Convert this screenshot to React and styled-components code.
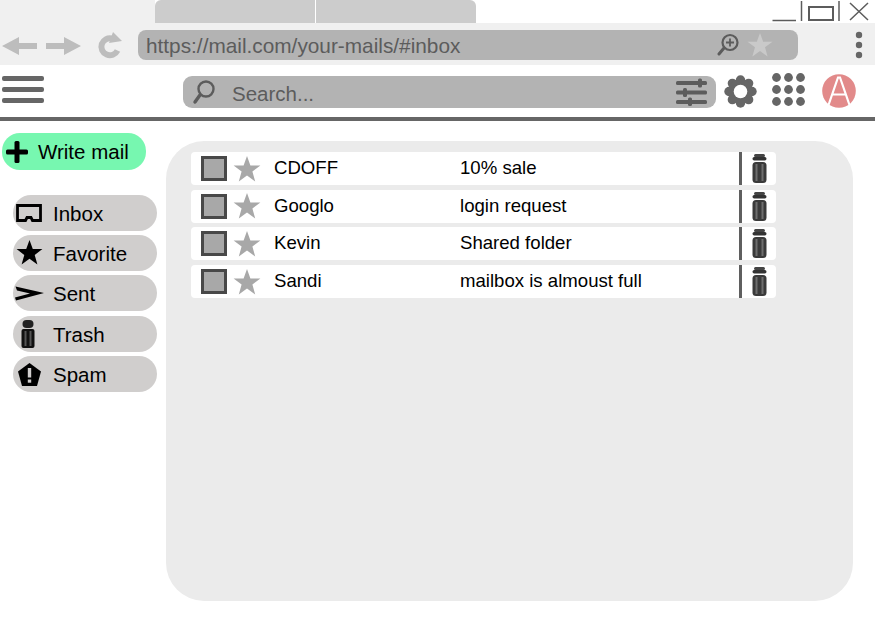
import React from "react";
import styled, { createGlobalStyle } from "styled-components";

const GlobalStyle = createGlobalStyle`
  html, body {
    margin: 0;
    padding: 0;
    background: #ffffff;
    font-family: "Liberation Sans", Arial, sans-serif;
  }
`;

const Page = styled.div`
  width: 875px;
  height: 622px;
  overflow: hidden;
  display: flex;
  flex-direction: column;
`;

const Space = styled.span`
  flex-shrink: 0;
  width: ${(p) => p.$w}px;
`;

// browser chrome
const TabStrip = styled.div`
  height: 23px;
  display: flex;
`;

const TabSpacer = styled.div`
  width: 155px;
  background: #f0f0f0;
`;

const Tab = styled.div`
  width: 160px;
  margin-right: 1px;
  background: #cccccc;
  border-radius: ${(p) => (p.$last ? "0 6px 0 0" : "6px 0 0 0")};
`;

const WindowControls = styled.div`
  margin-left: auto;
  padding-right: 6px;
  height: 23px;
`;

const AddressRow = styled.div`
  height: 42px;
  background: #f0f0f0;
  display: flex;
  align-items: center;
  padding: 0 12px 0 2px;
  box-sizing: border-box;
`;

const NavIcons = styled.div`
  width: 136px;
  display: flex;
  align-items: center;
  padding-top: 3px;
  box-sizing: border-box;
`;

const AddressPill = styled.div`
  width: 660px;
  height: 30px;
  margin-top: 1px;
  background: #b3b3b3;
  border-radius: 8px;
  display: flex;
  align-items: center;
  padding: 0 25px 0 8px;
  box-sizing: border-box;
  color: #5c5c5c;
  font-size: 20.8px;
`;

const Grow = styled.span`
  flex: 1;
  margin-top: 2px;
`;

const MenuBox = styled.div`
  margin-left: auto;
  margin-top: 2px;
  display: flex;
`;

const Toolbar = styled.div`
  height: 52px;
  display: flex;
  align-items: center;
  padding: 0 0 0 2px;
  box-sizing: border-box;
`;

const Burger = styled.div`
  width: 42px;
  margin-right: 139px;
  margin-top: -3px;
  display: flex;
  flex-direction: column;
  gap: 6px;
`;

const BurgerLine = styled.div`
  height: 5px;
  border-radius: 2px;
  background: #666666;
`;

const SearchPill = styled.div`
  width: 533px;
  height: 32px;
  margin-top: 2px;
  background: #b3b3b3;
  border-radius: 9px;
  display: flex;
  align-items: center;
  padding: 0 8px 0 9px;
  box-sizing: border-box;
  color: #5c5c5c;
  font-size: 20.5px;
`;

const SearchText = styled.span`
  flex: 1;
  margin: 3px 0 0 16px;
`;

const ToolIcons = styled.div`
  display: flex;
  align-items: center;
  margin-left: 8px;
`;

const GridBox = styled.div`
  display: flex;
  margin-top: -4px;
`;

const Rule = styled.div`
  height: 4px;
  background: #666666;
  flex-shrink: 0;
`;

// main area
const Body = styled.div`
  flex: 1;
  display: flex;
  align-items: flex-start;
`;

const Sidebar = styled.div`
  width: 166px;
  flex-shrink: 0;
  padding: 12px 0 0 2px;
  box-sizing: border-box;
`;

const WriteButton = styled.div`
  width: 144px;
  height: 37px;
  border-radius: 18px;
  background: #77f7b0;
  display: flex;
  align-items: center;
  gap: 9px;
  padding-left: 3px;
  box-sizing: border-box;
  color: #000;
  font-size: 20.5px;
`;

const NavList = styled.div`
  margin: 24.5px 0 0 11px;
  display: flex;
  flex-direction: column;
  gap: 4.4px;
`;

const NavItem = styled.div`
  width: 144px;
  height: 36px;
  border-radius: 18px;
  background: #d0cecd;
  display: flex;
  align-items: center;
  color: #000;
  font-size: 20.5px;
`;

const NavIconBox = styled.div`
  width: 40px;
  height: 36px;
  flex-shrink: 0;
  display: flex;
  align-items: center;
  justify-content: center;
  padding-right: ${(p) => p.$inset}px;
  box-sizing: border-box;
`;

const NavLabel = styled.span`
  margin-top: 2px;
`;

const Panel = styled.div`
  width: 687px;
  height: 460px;
  margin-top: 20px;
  background: #ebebeb;
  border-radius: 38px;
  padding: 11px 0 0 25px;
  box-sizing: border-box;
  display: flex;
  flex-direction: column;
  gap: 4.7px;
`;

const MailRow = styled.div`
  width: 585px;
  height: 33px;
  flex-shrink: 0;
  background: #ffffff;
  border-radius: 4px;
  display: flex;
  align-items: center;
  font-size: 18.6px;
  color: #000;
`;

const Checkbox = styled.div`
  width: 26px;
  height: 25px;
  margin-left: 10px;
  background: #a8a8a8;
  border: 3px solid #484848;
  box-sizing: border-box;
  flex-shrink: 0;
`;

const StarBox = styled.div`
  margin-left: 6px;
  width: 28px;
  height: 28px;
  flex-shrink: 0;
`;

const Sender = styled.div`
  width: 186px;
  margin: -1px 0 0 13px;
  flex-shrink: 0;
`;

const Subject = styled.div`
  flex: 1;
  margin-top: -1px;
`;

const RowDivider = styled.div`
  width: 3px;
  height: 100%;
  background: #5f5f5f;
  flex-shrink: 0;
`;

const RowTrash = styled.div`
  margin-left: 10px;
  margin-right: 9px;
  display: flex;
`;

const ArrowSvg = styled.svg`
  transform: ${(p) => (p.$flip ? "scaleX(-1)" : "none")};
`;

// drawings
const Controls = () => (
  <svg width="104" height="23" viewBox="0 0 104 23" fill="none" stroke="#5c5c5c" strokeWidth="1.5">
    <path d="M7.5 20.5H31" />
    <path d="M36.5 1V21" />
    <path d="M44 7H68V20H44Z" strokeWidth="2" />
    <path d="M74 1V21" />
    <path d="M85 3L103 20M103 3L85 20" />
  </svg>
);

const Arrow = ({ flip }) => (
  <ArrowSvg $flip={flip} width="36" height="22" viewBox="0 0 36 22">
    <path d="M0 11L17 2V8H35V14H17V20Z" fill="#bdbdbd" />
  </ArrowSvg>
);

const Reload = () => (
  <svg width="26" height="28" viewBox="0 0 26 28" fill="none">
    <path d="M20.5 18.5A8.5 8.5 0 1 1 15 6.5" stroke="#bdbdbd" strokeWidth="6" />
    <path d="M16 0L25 9L12 11Z" fill="#bdbdbd" />
  </svg>
);

const ZoomIcon = () => (
  <svg width="22" height="24" viewBox="0 0 22 24" fill="none" stroke="#5c5c5c">
    <circle cx="13" cy="9.5" r="7.5" strokeWidth="2.2" />
    <path d="M13 5.5V13.5M9 9.5H17" strokeWidth="1.8" />
    <path d="M7 15L2 21" strokeWidth="3" strokeLinecap="round" />
  </svg>
);

const Star = ({ size = 28, color = "#a8a8a8" }) => (
  <svg width={size} height={size} viewBox="0 0 28 28">
    <path d="M14 1L17.4 10.4H27.4L19.4 16.5L22.2 26.5L14 20.5L5.8 26.5L8.6 16.5L0.6 10.4H10.6Z" fill={color} />
  </svg>
);

const MenuDots = () => (
  <svg width="8" height="28" viewBox="0 0 8 28" fill="#666666">
    <circle cx="4" cy="4" r="3.2" />
    <circle cx="4" cy="14" r="3.2" />
    <circle cx="4" cy="24" r="3.2" />
  </svg>
);

const SearchIcon = () => (
  <svg width="24" height="26" viewBox="0 0 24 26" fill="none" stroke="#5c5c5c">
    <circle cx="14" cy="10" r="7.5" strokeWidth="2.4" />
    <path d="M8 16L3 23" strokeWidth="3.4" strokeLinecap="round" />
  </svg>
);

const Sliders = () => (
  <svg width="32" height="28" viewBox="0 0 32 28" fill="#5c5c5c">
    <rect x="0" y="3" width="31" height="4" rx="1.5" />
    <rect x="0" y="12.5" width="31" height="4" rx="1.5" />
    <rect x="0" y="22" width="31" height="4" rx="1.5" />
    <rect x="22" y="0.5" width="4" height="9" rx="1.5" />
    <rect x="7" y="10" width="4" height="9" rx="1.5" />
    <rect x="12" y="19.5" width="4" height="8.5" rx="1.5" />
  </svg>
);

const Gear = () => (
  <svg width="33" height="33" viewBox="0 0 33 33">
    <g fill="#666666">
      {[0, 45, 90, 135, 180, 225, 270, 315].map((a) => (
        <circle key={a} cx="16.5" cy="5" r="4.7" transform={`rotate(${a} 16.5 16.5)`} />
      ))}
      <circle cx="16.5" cy="16.5" r="12.5" />
    </g>
    <circle cx="16.5" cy="16.5" r="6.8" fill="#ffffff" />
  </svg>
);

const Grid = () => (
  <svg width="33" height="33" viewBox="0 0 33 33" fill="#666666">
    {[4.5, 16.5, 28.5].flatMap((y) =>
      [4.5, 16.5, 28.5].map((x) => <circle key={`${x}-${y}`} cx={x} cy={y} r="4.4" />)
    )}
  </svg>
);

const Avatar = () => (
  <svg width="34" height="34" viewBox="0 0 34 34" fill="none">
    <circle cx="17" cy="17" r="16.8" fill="#e28a8a" />
    <path d="M6.5 31L16 3.5H18L27.5 31M10.5 20.5H23.5" stroke="#ffffff" strokeWidth="2.2" />
  </svg>
);

const Plus = () => (
  <svg width="24" height="24" viewBox="0 0 24 24" fill="#000000">
    <rect x="9.5" y="1" width="5" height="22" rx="1.5" />
    <rect x="1" y="9.5" width="22" height="5" rx="1.5" />
  </svg>
);

const InboxIcon = () => (
  <svg width="26" height="18" viewBox="0 0 26 18" fill="none">
    <path d="M1.5 1.5H24.5V16.5H16.5L15 13.5H11L9.5 16.5H1.5Z" stroke="#000" strokeWidth="2.8" />
  </svg>
);

const SentIcon = () => (
  <svg width="29" height="15" viewBox="0 0 29 15">
    <path d="M0.5 0.5L29 7L1 14.5L0 11.5L15 7.5L2 4.5Z" fill="#000" />
  </svg>
);

const NavTrash = () => (
  <svg width="14" height="28" viewBox="0 0 14 28">
    <rect x="1.5" y="0" width="11" height="8" rx="4" fill="#222" />
    <rect x="0.5" y="9" width="13" height="19" rx="2" fill="#111" />
    <rect x="3.5" y="11" width="2" height="15" fill="#555" />
    <rect x="8.5" y="11" width="2" height="15" fill="#555" />
  </svg>
);

const SpamIcon = () => (
  <svg width="25" height="25" viewBox="0 0 25 25">
    <path d="M12.5 1L24 9.5L20 24H5L1 9.5Z" fill="#000" />
    <rect x="10.8" y="6" width="3.4" height="9.5" fill="#d0cecd" />
    <rect x="10.8" y="17.5" width="3.4" height="3.2" fill="#d0cecd" />
  </svg>
);

const RowTrashIcon = () => (
  <svg width="15" height="29" viewBox="0 0 15 29">
    <rect x="2" y="0" width="11" height="3" rx="1.5" fill="#444" />
    <rect x="0.5" y="3" width="14" height="3.5" rx="1.7" fill="#333" />
    <rect x="0.5" y="8" width="14" height="21" rx="3.5" fill="#3a3a3a" />
    <rect x="3.5" y="10" width="2" height="17" fill="#6e6e6e" />
    <rect x="9.5" y="10" width="2" height="17" fill="#6e6e6e" />
  </svg>
);

const navItems = [
  { label: "Inbox", icon: <InboxIcon />, inset: 8 },
  { label: "Favorite", icon: <Star size={27} color="#000" />, inset: 8 },
  { label: "Sent", icon: <SentIcon />, inset: 8 },
  { label: "Trash", icon: <NavTrash />, inset: 11 },
  { label: "Spam", icon: <SpamIcon />, inset: 8 },
];

const mails = [
  { from: "CDOFF", subject: "10% sale" },
  { from: "Googlo", subject: "login request" },
  { from: "Kevin", subject: "Shared folder" },
  { from: "Sandi", subject: "mailbox is almoust full" },
];

const App = () => {
  return (
    <Page>
      <GlobalStyle />
      <TabStrip>
        <TabSpacer />
        <Tab />
        <Tab $last />
        <WindowControls>
          <Controls />
        </WindowControls>
      </TabStrip>
      <AddressRow>
        <NavIcons>
          <Arrow />
          <Space $w={7} />
          <Arrow flip />
          <Space $w={16} />
          <Reload />
        </NavIcons>
        <AddressPill>
          <Grow>https://mail.com/your-mails/#inbox</Grow>
          <ZoomIcon />
          <Space $w={8} />
          <Star size={26} color="#c9c9c9" />
        </AddressPill>
        <MenuBox>
          <MenuDots />
        </MenuBox>
      </AddressRow>
      <Toolbar>
        <Burger>
          <BurgerLine />
          <BurgerLine />
          <BurgerLine />
        </Burger>
        <SearchPill>
          <SearchIcon />
          <SearchText>Search...</SearchText>
          <Sliders />
        </SearchPill>
        <ToolIcons>
          <Gear />
          <Space $w={15} />
          <GridBox>
            <Grid />
          </GridBox>
          <Space $w={17} />
          <Avatar />
        </ToolIcons>
      </Toolbar>
      <Rule />
      <Body>
        <Sidebar>
          <WriteButton>
            <Plus />
            Write mail
          </WriteButton>
          <NavList>
            {navItems.map((item) => (
              <NavItem key={item.label}>
                <NavIconBox $inset={item.inset}>{item.icon}</NavIconBox>
                <NavLabel>{item.label}</NavLabel>
              </NavItem>
            ))}
          </NavList>
        </Sidebar>
        <Panel>
          {mails.map((mail) => (
            <MailRow key={mail.from}>
              <Checkbox />
              <StarBox>
                <Star />
              </StarBox>
              <Sender>{mail.from}</Sender>
              <Subject>{mail.subject}</Subject>
              <RowDivider />
              <RowTrash>
                <RowTrashIcon />
              </RowTrash>
            </MailRow>
          ))}
        </Panel>
      </Body>
    </Page>
  );
};

export default App;
